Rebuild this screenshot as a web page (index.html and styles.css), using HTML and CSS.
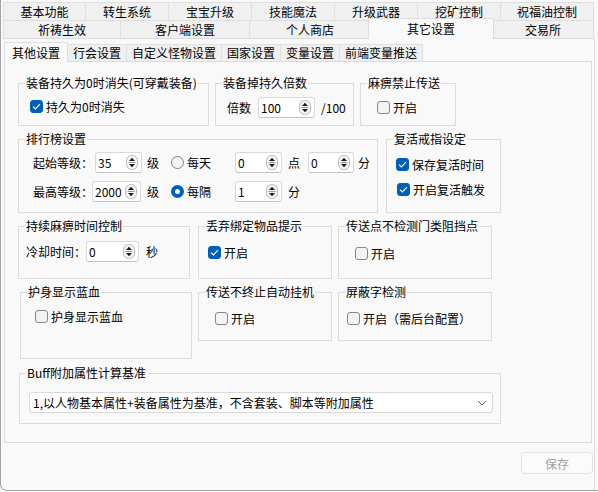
FILE: index.html
```html
<!DOCTYPE html>
<html lang="zh-CN">
<head>
  <meta charset="UTF-8">
  <title>其它设置</title>
  <link rel="stylesheet" href="styles.css">
</head>
<body>
  <div class="window">
    <div class="tabrow row1">
      <div class="tab">基本功能</div>
      <div class="tab">转生系统</div>
      <div class="tab">宝宝升级</div>
      <div class="tab">技能魔法</div>
      <div class="tab">升级武器</div>
      <div class="tab">挖矿控制</div>
      <div class="tab">祝福油控制</div>
    </div>
    <div class="tabrow row2">
      <div class="tab">祈祷生效</div>
      <div class="tab">客户端设置</div>
      <div class="tab">个人商店</div>
      <div class="tab active">其它设置</div>
      <div class="tab">交易所</div>
    </div>

    <div class="outer">
      <div class="subtabs">
        <div class="subtab active">其他设置</div>
        <div class="subtab">行会设置</div>
        <div class="subtab">自定义怪物设置</div>
        <div class="subtab">国家设置</div>
        <div class="subtab">变量设置</div>
        <div class="subtab">前端变量推送</div>
      </div>

      <div class="page">
        <div class="row">
          <fieldset class="group g1">
            <legend>装备持久为0时消失(可穿戴装备)</legend>
            <div class="check"><span class="box on"><svg width="9" height="7" viewBox="0 0 9 7"><path d="M1 3.6 L3.4 6 L8 1.2" fill="none" stroke="#fff" stroke-width="1.1"/></svg></span>持久为0时消失</div>
          </fieldset>
          <fieldset class="group g2">
            <legend>装备掉持久倍数</legend>
            <div class="line">
              <span class="lbl-rate">倍数</span>
              <div class="spin w57"><span>100</span><svg width="12" height="15" viewBox="0 0 12 15"><rect x="0.5" y="0.5" width="11" height="14" rx="5" fill="#f4f4f4" stroke="#b9b9b9"/><path d="M3 6 L6 2.8 L9 6 Z" fill="#1b1b1b"/><path d="M2.5 7.5 H9.5" stroke="#9a9a9a"/><path d="M3 9 L6 12.2 L9 9 Z" fill="#1b1b1b"/></svg></div>
              <span class="unit">/100</span>
            </div>
          </fieldset>
          <fieldset class="group g3">
            <legend>麻痹禁止传送</legend>
            <div class="check"><span class="box"></span>开启</div>
          </fieldset>
        </div>

        <div class="row gap-b">
          <fieldset class="group g4">
            <legend>排行榜设置</legend>
            <div class="rank first">
              <span class="lbl w62">起始等级：</span>
              <div class="spin w47"><span>35</span><svg width="12" height="15" viewBox="0 0 12 15"><rect x="0.5" y="0.5" width="11" height="14" rx="5" fill="#f4f4f4" stroke="#b9b9b9"/><path d="M3 6 L6 2.8 L9 6 Z" fill="#1b1b1b"/><path d="M2.5 7.5 H9.5" stroke="#9a9a9a"/><path d="M3 9 L6 12.2 L9 9 Z" fill="#1b1b1b"/></svg></div>
              <span class="ml5">级</span>
              <span class="opt"><span class="radio"></span>每天</span>
              <div class="spin w47 ml24"><span>0</span><svg width="12" height="15" viewBox="0 0 12 15"><rect x="0.5" y="0.5" width="11" height="14" rx="5" fill="#f4f4f4" stroke="#b9b9b9"/><path d="M3 6 L6 2.8 L9 6 Z" fill="#1b1b1b"/><path d="M2.5 7.5 H9.5" stroke="#9a9a9a"/><path d="M3 9 L6 12.2 L9 9 Z" fill="#1b1b1b"/></svg></div>
              <span class="ml6">点</span>
              <div class="spin w46 ml8"><span>0</span><svg width="12" height="15" viewBox="0 0 12 15"><rect x="0.5" y="0.5" width="11" height="14" rx="5" fill="#f4f4f4" stroke="#b9b9b9"/><path d="M3 6 L6 2.8 L9 6 Z" fill="#1b1b1b"/><path d="M2.5 7.5 H9.5" stroke="#9a9a9a"/><path d="M3 9 L6 12.2 L9 9 Z" fill="#1b1b1b"/></svg></div>
              <span class="ml4">分</span>
            </div>
            <div class="rank second">
              <span class="lbl w59">最高等级：</span>
              <div class="spin w49"><span>2000</span><svg width="12" height="15" viewBox="0 0 12 15"><rect x="0.5" y="0.5" width="11" height="14" rx="5" fill="#f4f4f4" stroke="#b9b9b9"/><path d="M3 6 L6 2.8 L9 6 Z" fill="#1b1b1b"/><path d="M2.5 7.5 H9.5" stroke="#9a9a9a"/><path d="M3 9 L6 12.2 L9 9 Z" fill="#1b1b1b"/></svg></div>
              <span class="ml6">级</span>
              <span class="opt"><span class="radio on"></span>每隔</span>
              <div class="spin w47 ml24"><span>1</span><svg width="12" height="15" viewBox="0 0 12 15"><rect x="0.5" y="0.5" width="11" height="14" rx="5" fill="#f4f4f4" stroke="#b9b9b9"/><path d="M3 6 L6 2.8 L9 6 Z" fill="#1b1b1b"/><path d="M2.5 7.5 H9.5" stroke="#9a9a9a"/><path d="M3 9 L6 12.2 L9 9 Z" fill="#1b1b1b"/></svg></div>
              <span class="ml6">分</span>
            </div>
          </fieldset>
          <fieldset class="group g5">
            <legend>复活戒指设定</legend>
            <div class="check"><span class="box on"><svg width="9" height="7" viewBox="0 0 9 7"><path d="M1 3.6 L3.4 6 L8 1.2" fill="none" stroke="#fff" stroke-width="1.1"/></svg></span>保存复活时间</div>
            <div class="check next"><span class="box on"><svg width="9" height="7" viewBox="0 0 9 7"><path d="M1 3.6 L3.4 6 L8 1.2" fill="none" stroke="#fff" stroke-width="1.1"/></svg></span>开启复活触发</div>
          </fieldset>
        </div>

        <div class="row gap-c">
          <fieldset class="group g6">
            <legend>持续麻痹时间控制</legend>
            <div class="line">
              <span class="lbl w60">冷却时间：</span>
              <div class="spin w53"><span>0</span><svg width="12" height="15" viewBox="0 0 12 15"><rect x="0.5" y="0.5" width="11" height="14" rx="5" fill="#f4f4f4" stroke="#b9b9b9"/><path d="M3 6 L6 2.8 L9 6 Z" fill="#1b1b1b"/><path d="M2.5 7.5 H9.5" stroke="#9a9a9a"/><path d="M3 9 L6 12.2 L9 9 Z" fill="#1b1b1b"/></svg></div>
              <span class="ml7">秒</span>
            </div>
          </fieldset>
          <fieldset class="group g7">
            <legend>丢弃绑定物品提示</legend>
            <div class="check"><span class="box on"><svg width="9" height="7" viewBox="0 0 9 7"><path d="M1 3.6 L3.4 6 L8 1.2" fill="none" stroke="#fff" stroke-width="1.1"/></svg></span>开启</div>
          </fieldset>
          <fieldset class="group g8">
            <legend>传送点不检测门类阻挡点</legend>
            <div class="check"><span class="box"></span>开启</div>
          </fieldset>
        </div>

        <div class="row gap-d">
          <fieldset class="group g9">
            <legend>护身显示蓝血</legend>
            <div class="check"><span class="box"></span>护身显示蓝血</div>
          </fieldset>
          <fieldset class="group g10">
            <legend>传送不终止自动挂机</legend>
            <div class="check"><span class="box"></span>开启</div>
          </fieldset>
          <fieldset class="group g11">
            <legend>屏蔽字检测</legend>
            <div class="check"><span class="box"></span>开启（需后台配置）</div>
          </fieldset>
        </div>

        <div class="row gap-e">
          <fieldset class="group g12">
            <legend>Buff附加属性计算基准</legend>
            <div class="select">
              <span>1,以人物基本属性+装备属性为基准，不含套装、脚本等附加属性</span>
              <svg width="10" height="6" viewBox="0 0 10 6"><path d="M1 1 L5 5 L9 1" fill="none" stroke="#5c5c5c"/></svg>
            </div>
          </fieldset>
        </div>
      </div>

      <div class="footer">
        <button class="save" disabled>保存</button>
      </div>
    </div>
  </div>
</body>
</html>
```

FILE: styles.css
```css
* {
  box-sizing: border-box;
}

body {
  margin: 0;
  font-family: "Noto Sans CJK SC", "Microsoft YaHei", sans-serif;
  font-size: 12px;
  color: #000;
  background: #f9f9f9;
}

.window {
  width: 598px;
  height: 491px;
  padding: 2px 0 0 2px;
  border-left: 1px solid #a3a3a3;
  border-bottom: 1px solid #a3a3a3;
  border-bottom-left-radius: 7px;
  overflow: hidden;
}

/* top tab strip */
.tabrow {
  display: grid;
  width: 591px;
}

.row1 {
  grid-template-columns: 82px repeat(5, 83px) 1fr;
}

.row2 {
  grid-template-columns: 117px 129px 121px 122px 1fr;
}

.tab {
  height: 18px;
  line-height: 17px;
  text-align: center;
  background: #f0f0f0;
  border: 1px solid #dfdfdf;
  border-right: none;
  border-bottom: none;
  white-space: nowrap;
}

.tab:last-child {
  border-right: 1px solid #dfdfdf;
}

.tab.active {
  position: relative;
  z-index: 1;
  height: 21px;
  margin: -2px -2px -1px;
  line-height: 19px;
  background: #f9f9f9;
  border-right: 1px solid #dcdcdc;
}

.outer {
  width: 592px;
  padding: 3px 0 0 1px;
  border-top: 1px solid #dcdcdc;
  border-right: 1px solid #dcdcdc;
  height: 452px;
}

/* inner tab strip */
.subtabs {
  display: flex;
  align-items: flex-end;
  height: 19px;
}

.subtab {
  height: 17px;
  padding: 0 5px;
  line-height: 16px;
  background: #f0f0f0;
  border: 1px solid #dfdfdf;
  border-left: none;
  border-bottom: none;
  white-space: nowrap;
}

.subtab.active {
  position: relative;
  z-index: 1;
  width: 64px;
  height: 20px;
  margin-bottom: -1px;
  line-height: 19px;
  text-align: center;
  background: #f9f9f9;
  border-left: 1px solid #dcdcdc;
}

.page {
  width: 588px;
  height: 382px;
  padding: 13px 0 0 13px;
  background: #f9f9f9;
  border: 1px solid #dcdcdc;
}

/* group boxes */
.row {
  display: flex;
  align-items: flex-start;
}

.gap-b,
.gap-c,
.gap-d {
  margin-top: 5px;
}

.gap-e {
  margin-top: 6px;
}

.group {
  margin: 0;
  padding: 0 0 0 6px;
  min-width: 0;
  border: 1px solid #dcdcdc;
}

.group legend {
  padding: 0 1px;
  height: 16px;
  line-height: 16px;
  white-space: nowrap;
}

.g1 { width: 191px; height: 51px; }
.g2 { width: 139px; height: 51px; margin-left: 6px; }
.g3 { width: 96px; height: 51px; margin-left: 6px; }
.g4 { width: 360px; height: 82px; }
.g5 { width: 115px; height: 82px; margin-left: 8px; }
.g6 { width: 172px; height: 61px; }
.g7 { width: 134px; height: 61px; margin-left: 8px; }
.g8 { width: 154px; height: 61px; margin-left: 6px; }
.g9 { width: 172px; height: 75px; margin-left: 2px; }
.g10 { width: 134px; height: 57px; margin-left: 6px; }
.g11 { width: 154px; height: 57px; margin-left: 6px; }
.g12 { width: 482px; height: 59px; margin-left: 1px; }

/* checkboxes and radios */
.check {
  display: flex;
  align-items: center;
  height: 16px;
  white-space: nowrap;
}

.box {
  display: flex;
  align-items: center;
  justify-content: center;
  width: 13px;
  height: 13px;
  margin-right: 3px;
  background: #f3f3f3;
  border: 1px solid #878787;
  border-radius: 3px;
}

.box.on {
  background: #005fb8;
  border-color: #005fb8;
}

.g1 .check { margin: 7px 0 0 5px; }
.g3 .check { margin: 8px 0 0 10px; }
.g5 .check { margin: 9px 0 0 3px; }
.g5 .check.next { margin-top: 9px; margin-left: 4px; }
.g7 .check { margin: 10px 0 0 3px; }
.g8 .check { margin: 11px 0 0 10px; }
.g9 .check { margin: 8px 0 0 8px; }
.g10 .check { margin: 10px 0 0 10px; }
.g11 .check { margin: 10px 0 0 2px; }

.opt {
  display: flex;
  align-items: center;
  width: 40px;
  margin-left: 12px;
}

.radio {
  width: 13px;
  height: 13px;
  margin-right: 3px;
  background: #f3f3f3;
  border: 1px solid #878787;
  border-radius: 50%;
}

.radio.on {
  background: #fff;
  border: 4px solid #005fb8;
}

/* spin boxes */
.line,
.rank {
  display: flex;
  align-items: center;
  height: 21px;
  white-space: nowrap;
}

.g2 .line { margin-top: 6px; }
.g6 .line { margin-top: 7px; }
.rank.first { margin-top: 5px; }
.rank.second { margin-top: 8px; }

.spin {
  display: flex;
  align-items: center;
  justify-content: space-between;
  height: 21px;
  padding: 0 3px 0 2px;
  background: #fff;
  border: 1px solid #d9d9d9;
  border-bottom-color: #c4c4c4;
  border-radius: 3px;
}

.w46 { width: 46px; }
.w47 { width: 47px; }
.w49 { width: 49px; }
.w53 { width: 53px; }
.w57 { width: 57px; }

.lbl { flex: none; }
.rank .lbl { margin-left: 8px; }
.g6 .lbl { margin-left: 1px; }
.w59 { width: 59px; }
.w60 { width: 60px; }
.w62 { width: 62px; }

.lbl-rate { margin-left: 5px; margin-right: 7px; }
.unit { margin-left: 6px; }

.ml4 { margin-left: 4px; }
.ml5 { margin-left: 5px; }
.ml6 { margin-left: 6px; }
.ml7 { margin-left: 7px; }
.ml8 { margin-left: 8px; }
.ml24 { margin-left: 24px; }

/* combo box */
.select {
  display: flex;
  align-items: center;
  justify-content: space-between;
  width: 464px;
  height: 21px;
  margin: 11px 0 0 3px;
  padding: 0 5px 0 3px;
  background: #fff;
  border: 1px solid #d9d9d9;
  border-radius: 3px;
  white-space: nowrap;
}

.footer {
  display: flex;
  justify-content: flex-end;
  padding: 9px 1px 0 0;
}

.save {
  width: 72px;
  height: 22px;
  padding: 0;
  font: inherit;
  color: #a0a0a0;
  background: #fbfbfb;
  border: 1px solid #e3e3e3;
  border-radius: 4px;
}
```
